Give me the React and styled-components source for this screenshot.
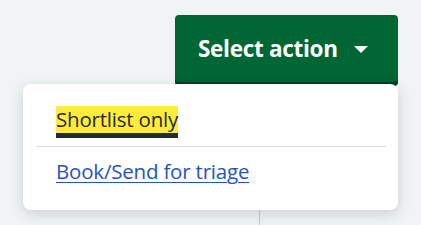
import React from "react";
import styled, { createGlobalStyle } from "styled-components";

const Global = createGlobalStyle`
  html, body { margin: 0; padding: 0; background: #f0f4f5; }
  body { font-family: "Open Sans", "Noto Sans", Arial, sans-serif; color: #212b32; }
`;

const Page = styled.div`
  width: 421px;
  height: 225px;
  overflow: hidden;
  position: relative;
`;

const Toolbar = styled.div`
  display: flex;
  justify-content: flex-end;
  padding: 15px 23px 0 0;
`;

const ActionWrap = styled.div`
  position: relative;
`;

const ActionButton = styled.button`
  display: flex;
  align-items: center;
  gap: 16px;
  width: 223px;
  height: 67px;
  padding: 0 0 0 23px;
  border: 0;
  border-radius: 4px;
  background: #006633;
  box-shadow: 0 4px 0 #00401e;
  color: #fff;
  font-family: "Open Sans", "Noto Sans", Arial, sans-serif;
  font-weight: 700;
  font-size: 22.5px;
  letter-spacing: -0.3px;
  cursor: pointer;
`;

const Caret = styled.svg`
  width: 14px;
  height: 7px;
  margin-top: 2px;
`;

const Menu = styled.div`
  position: absolute;
  top: 69px;
  right: 0;
  width: 375px;
  height: 126px;
  box-sizing: border-box;
  background: #fff;
  border-radius: 8px;
  box-shadow: 0 4px 14px rgba(33, 43, 50, 0.18);
  padding: 22px 12px 0 13px;
  z-index: 2;
`;

const MenuItem = styled.div`
  padding: 0 0 0 20px;
  height: ${(p) => p.$h}px;
  display: flex;
  align-items: ${(p) => p.$align};
`;

const Highlight = styled.span`
  background: #ffeb3b;
  box-shadow: inset 0 -5px 0 #212b32;
  padding: 0 0 5px;
  font-size: 20.5px;
  line-height: 27px;
  color: #212b32;
  letter-spacing: -0.2px;
`;

const Divider = styled.hr`
  border: 0;
  border-top: 1px solid #d8dde0;
  margin: 0;
`;

const MenuLink = styled.a`
  font-size: 20.5px;
  color: #2655b8;
  text-decoration: underline;
  text-underline-offset: 3px;
  text-decoration-thickness: 1px;
  letter-spacing: -0.2px;
  margin-top: -1px;
  cursor: pointer;
`;

const Content = styled.div`
  display: grid;
  grid-template-columns: 260px 1fr;
  height: 200px;
  margin-top: 10px;
`;

const Column = styled.div`
  border-right: ${(p) => (p.$line ? "1px solid #c4ccd0" : "0")};
`;

export default function App() {
  return (
    <Page>
      <Global />
      <Toolbar>
        <ActionWrap>
          <ActionButton>
            Select action
            <Caret viewBox="0 0 14 7">
              <path d="M0 0 L14 0 L7 7 Z" fill="#fff" />
            </Caret>
          </ActionButton>
          <Menu>
            <MenuItem $h={40} $align="flex-start">
              <Highlight>Shortlist only</Highlight>
            </MenuItem>
            <Divider />
            <MenuItem $h={48} $align="center">
              <MenuLink>Book/Send for triage</MenuLink>
            </MenuItem>
          </Menu>
        </ActionWrap>
      </Toolbar>
      <Content>
        <Column $line />
        <Column />
      </Content>
    </Page>
  );
}
